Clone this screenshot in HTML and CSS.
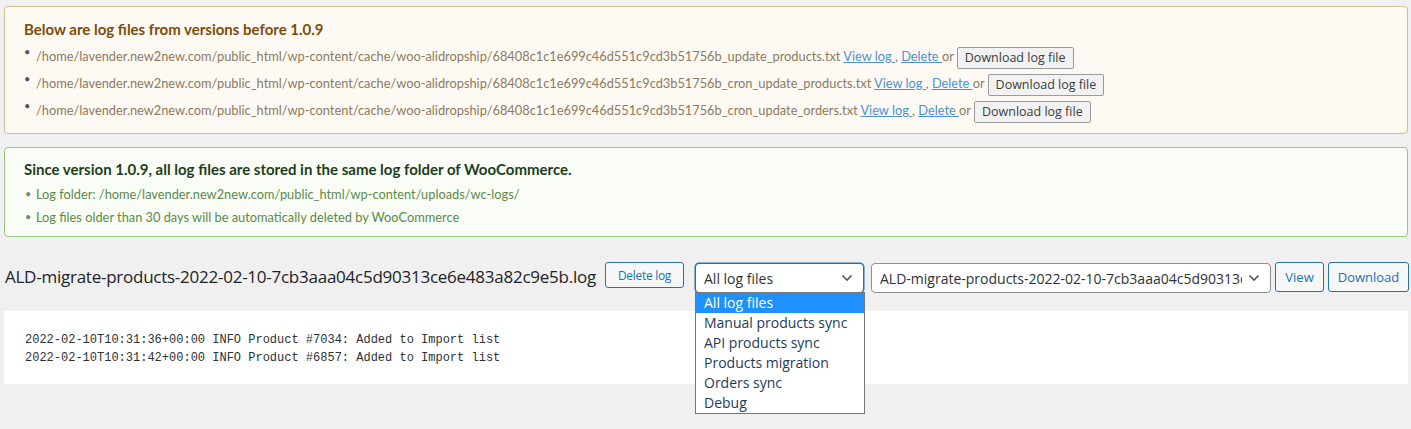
FILE: index.html
```html
<!DOCTYPE html>
<html>
<head>
<meta charset="utf-8">
<link rel="stylesheet" href="styles.css">
</head>
<body>
<div class="wrap">
  <div class="notice notice-old">
    <h3 class="notice-title">Below are log files from versions before 1.0.9</h3>
    <ul class="notice-list">
      <li><span class="path">/home/lavender.new2new.com/public_html/wp-content/cache/woo-alidropship/68408c1c1e699c46d551c9cd3b51756b_update_products.txt</span> <a href="#">View log </a>, <a href="#">Delete </a> or <button class="btn-old">Download log file</button></li>
      <li><span class="path">/home/lavender.new2new.com/public_html/wp-content/cache/woo-alidropship/68408c1c1e699c46d551c9cd3b51756b_cron_update_products.txt</span> <a href="#">View log </a>, <a href="#">Delete </a> or <button class="btn-old">Download log file</button></li>
      <li><span class="path">/home/lavender.new2new.com/public_html/wp-content/cache/woo-alidropship/68408c1c1e699c46d551c9cd3b51756b_cron_update_orders.txt</span> <a href="#">View log </a>, <a href="#">Delete </a> or <button class="btn-old">Download log file</button></li>
    </ul>
  </div>

  <div class="notice notice-new">
    <h3 class="notice-title">Since version 1.0.9, all log files are stored in the same log folder of WooCommerce.</h3>
    <ul class="notice-list">
      <li>Log folder: /home/lavender.new2new.com/public_html/wp-content/uploads/wc-logs/</li>
      <li>Log files older than 30 days will be automatically deleted by WooCommerce</li>
    </ul>
  </div>

  <div class="log-head">
    <h2 class="log-title">ALD-migrate-products-2022-02-10-7cb3aaa04c5d90313ce6e483a82c9e5b.log</h2>
    <button class="btn btn-delete">Delete log</button>
    <div class="select-wrap">
      <div class="select select-type focused">
        <span class="select-text">All log files</span>
        <svg class="chev" width="12" height="8" viewBox="0 0 12 8"><path d="M1.5 1.5 L6 6 L10.5 1.5" fill="none" stroke="#50575e" stroke-width="1.6"/></svg>
      </div>
      <ul class="dropdown">
        <li class="active">All log files</li>
        <li>Manual products sync</li>
        <li>API products sync</li>
        <li>Products migration</li>
        <li>Orders sync</li>
        <li>Debug</li>
      </ul>
    </div>
    <div class="file-wrap">
      <select class="file-select">
        <option>ALD-migrate-products-2022-02-10-7cb3aaa04c5d90313ce6e483a82c9e5b.log</option>
      </select>
      <svg class="chev chev-over" width="12" height="8" viewBox="0 0 12 8"><path d="M1.5 1.5 L6 6 L10.5 1.5" fill="none" stroke="#50575e" stroke-width="1.6"/></svg>
    </div>
    <button class="btn btn-view">View</button>
    <button class="btn btn-download">Download</button>
  </div>

  <div class="log-box">
<pre class="log-text">2022-02-10T10:31:36+00:00 INFO Product #7034: Added to Import list
2022-02-10T10:31:42+00:00 INFO Product #6857: Added to Import list</pre>
  </div>
</div>
</body>
</html>
```

FILE: styles.css
```css
html, body {
  margin: 0;
  padding: 0;
  background: #f0f0f1;
}
body {
  font-family: "Open Sans", "Noto Sans", sans-serif;
  color: #1d2327;
  min-height: 429px;
}
.wrap {
  padding: 6px 3px 45px 4px;
}
.notice {
  border: 1px solid;
  border-radius: 4px;
  padding: 12px 19px 10px 19px;
  font-family: Lato, sans-serif;
}
.notice-old {
  background: #fef9f2;
  border-color: #d3bd94;
  height: 104px;
}
.notice-new {
  margin-top: 13px;
  background: #f9fdf6;
  border-color: #98c48a;
  height: 67px;
  padding-top: 11px;
}
.notice-title {
  margin: 0;
  font-size: 15px;
  font-weight: 700;
  line-height: 20px;
}
.notice-old .notice-title { color: #7c4d0b; }
.notice-new .notice-title { color: #1f3e1c; }
.notice-list {
  list-style: none;
  margin: 0;
  padding: 0;
}
.notice-list li {
  position: relative;
  padding-left: 12px;
  font-size: 12.8px;
  white-space: nowrap;
}
.notice-list li::before {
  content: "•";
  position: absolute;
  left: 0;
}
.notice-old .notice-list { margin-top: 4px; }
.notice-old .notice-list li {
  height: 27px;
  line-height: 26px;
  color: #8b7b62;
}
.notice-old .notice-list li::before {
  top: -4px;
  color: #555;
  font-size: 11px;
}
.notice-new .notice-list { margin-top: 3px; }
.notice-new .notice-list li {
  height: 23px;
  line-height: 24px;
  color: #5b8a4b;
}
.notice-new .notice-list li::before {
  color: #7a8a78;
  font-size: 11px;
  left: 1px;
}
.notice-list a {
  color: #4a92d4;
  text-decoration: underline;
}
.btn-old {
  font-family: "Open Sans", sans-serif;
  font-size: 12.5px;
  color: #3c3c3c;
  background: #f2f2f2;
  border: 1px solid #9a9a9a;
  border-radius: 2px;
  padding: 1px 7px;
  height: 22px;
  line-height: 18px;
  vertical-align: middle;
}

.log-head {
  display: flex;
  align-items: flex-start;
  margin-top: 25px;
  height: 48px;
}
.log-head > * {
  flex: none;
}
.log-title {
  margin: 3px 0 0 1px;
  width: 592px;
  font-size: 17px;
  font-weight: 400;
  letter-spacing: -0.25px;
  line-height: 24px;
  color: #1d2327;
  white-space: nowrap;
}
.btn {
  font-family: "Open Sans", sans-serif;
  background: #f6f7f7;
  color: #2271b1;
  border: 1px solid #2271b1;
  border-radius: 3px;
  font-size: 13px;
  padding: 0;
  white-space: nowrap;
  cursor: pointer;
}
.btn-delete {
  margin-left: 8px;
  height: 26px;
  width: 79px;
  font-size: 12px;
  letter-spacing: -0.3px;
}
.select-wrap {
  position: relative;
  margin-left: 11px;
  margin-top: 1px;
}
.select {
  box-sizing: border-box;
  height: 30px;
  background: #fff;
  border: 1px solid #8c8f94;
  border-radius: 4px;
  display: flex;
  align-items: center;
  padding: 0 10px 0 8px;
  font-size: 14px;
  color: #2c3338;
  position: relative;
}
.select-type {
  width: 169px;
}
.select.focused {
  border-color: #2271b1;
  box-shadow: 0 0 0 0.5px #2271b1;
}
.select-text {
  flex: 1;
  min-width: 0;
  white-space: nowrap;
  overflow: hidden;
}
.chev {
  flex: none;
  margin-left: 6px;
}
.file-wrap {
  position: relative;
  margin-left: 7px;
  margin-top: 1px;
}
.file-select {
  -webkit-appearance: none;
  appearance: none;
  box-sizing: border-box;
  display: block;
  width: 400px;
  height: 30px;
  margin: 0;
  background: #fff;
  border: 1px solid #8c8f94;
  border-radius: 4px;
  padding: 0 28px 0 8px;
  font-family: "Open Sans", "Noto Sans", sans-serif;
  font-size: 14px;
  color: #2c3338;
  outline: none;
}
.chev-over {
  position: absolute;
  right: 11px;
  top: 11px;
  margin: 0;
  pointer-events: none;
}
.btn-view {
  margin-left: 4px;
  width: 49px;
  height: 30px;
}
.btn-download {
  margin-left: 4px;
  width: 81px;
  height: 30px;
}
.dropdown {
  position: absolute;
  left: 0;
  top: 29px;
  width: 170px;
  box-sizing: border-box;
  margin: 0;
  padding: 0;
  list-style: none;
  background: #fff;
  border: 1px solid #767676;
  font-size: 14px;
  z-index: 10;
}
.dropdown li {
  height: 20px;
  line-height: 20px;
  padding-left: 8px;
  color: #1d3b5a;
  white-space: nowrap;
}
.dropdown li.active {
  background: #1e90ff;
  color: #fff;
}

.log-box {
  margin-top: 1px;
  width: 1404px;
  background: #fff;
  height: 73px;
  box-sizing: border-box;
  padding: 20px 21px;
}
.log-text {
  margin: 0;
  font-family: "Liberation Mono", "DejaVu Sans Mono", monospace;
  font-size: 12px;
  line-height: 18px;
  color: #2c3338;
}
```
